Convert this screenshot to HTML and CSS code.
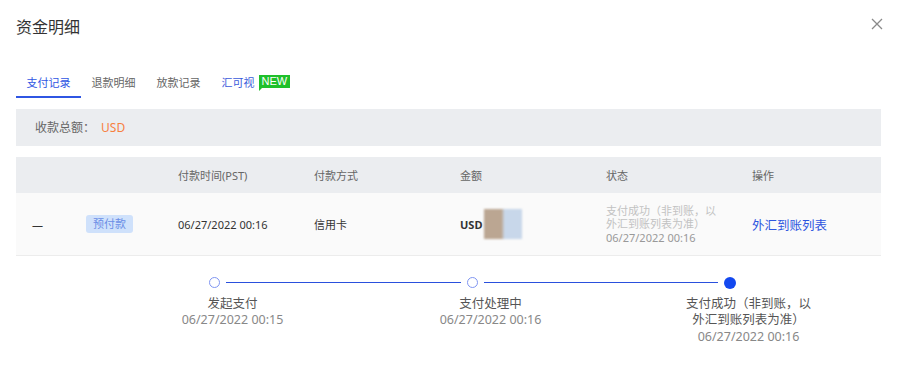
FILE: index.html
```html
<!DOCTYPE html>
<html lang="zh">
<head>
<meta charset="utf-8">
<title>资金明细</title>
<link rel="stylesheet" href="styles.css">
</head>
<body>
<div class="dialog">
  <div class="header">
    <div class="title">资金明细</div>
    <svg class="close" width="12" height="12" viewBox="0 0 12 12"><path d="M1 1L11 11M11 1L1 11" stroke="#8a8a8a" stroke-width="1.3" fill="none"/></svg>
  </div>
  <div class="tabs">
    <div class="tab active">支付记录</div>
    <div class="tab">退款明细</div>
    <div class="tab">放款记录</div>
    <div class="tab link">汇可视<span class="badge">NEW</span></div>
  </div>
  <div class="summary">收款总额：<span class="orange">USD</span></div>
  <div class="table">
    <div class="row head">
      <div class="cell"></div>
      <div class="cell"></div>
      <div class="cell">付款时间(PST)</div>
      <div class="cell">付款方式</div>
      <div class="cell">金额</div>
      <div class="cell">状态</div>
      <div class="cell">操作</div>
    </div>
    <div class="row body">
      <div class="cell">—</div>
      <div class="cell"><span class="tag">预付款</span></div>
      <div class="cell">06/27/2022 00:16</div>
      <div class="cell">信用卡</div>
      <div class="cell"><span class="bold">USD</span><span class="blur"></span></div>
      <div class="cell status"><span class="light">支付成功（非到账，以<br>外汇到账列表为准）</span><span class="date">06/27/2022 00:16</span></div>
      <div class="cell"><span class="action">外汇到账列表</span></div>
    </div>
  </div>
  <div class="timeline">
    <div class="step first">
      <div class="track"><span class="seg left"></span><span class="dot"></span><span class="seg right on"></span></div>
      <div class="name">发起支付</div>
      <div class="time">06/27/2022 00:15</div>
    </div>
    <div class="step">
      <div class="track"><span class="seg left on"></span><span class="dot"></span><span class="seg right on"></span></div>
      <div class="name">支付处理中</div>
      <div class="time">06/27/2022 00:16</div>
    </div>
    <div class="step last">
      <div class="track"><span class="seg left on"></span><span class="dot fill"></span><span class="seg right"></span></div>
      <div class="name">支付成功（非到账，以<br>外汇到账列表为准）</div>
      <div class="time">06/27/2022 00:16</div>
    </div>
  </div>
</div>
</body>
</html>
```
FILE: styles.css
```css
* { box-sizing: border-box; }
body {
  margin: 0;
  background: #fff;
  font-family: "Noto Sans", "Noto Sans CJK SC", sans-serif;
  color: #333;
}
.dialog {
  width: 898px;
  height: 365px;
  padding: 0 17px 0 16px;
}
.header {
  display: flex;
  justify-content: space-between;
  align-items: center;
  height: 54px;
}
.title {
  font-size: 16px;
  line-height: 22px;
  color: #333;
}
.close { margin-right: -2px; margin-top: -6px; }
.tabs {
  display: flex;
  margin-top: 16px;
  height: 28px;
}
.tab {
  padding: 0 10.5px;
  font-size: 11px;
  line-height: 26px;
  color: #666;
  border-bottom: 2px solid transparent;
  display: flex;
  align-items: flex-start;
}
.tab.active {
  color: #2f56e3;
  border-bottom-color: #2f56e3;
}
.tab.link { color: #3b5bdb; }
.badge {
  position: relative;
  top: 5px;
  margin-left: 4px;
  background: #1fc02b;
  color: #fff;
  font-size: 11px;
  line-height: 13px;
  height: 13px;
  padding: 0 3px;
  font-family: "Liberation Sans", sans-serif;
}
.badge::after {
  content: "";
  position: absolute;
  left: 0;
  bottom: -3px;
  border-left: 3px solid #1fc02b;
  border-bottom: 3px solid transparent;
}
.summary {
  margin-top: 11px;
  height: 37px;
  background: #ebedf0;
  padding-left: 19px;
  font-size: 12px;
  line-height: 37px;
  color: #666;
}
.orange { color: #f7803f; margin-left: 6px; }
.table { margin-top: 11px; }
.row {
  display: grid;
  grid-template-columns: 54px 92px 136px 146px 146px 146px 1fr;
  align-items: center;
}
.cell { padding-left: 16px; font-size: 11px; }
.row.head {
  height: 36px;
  background: #ebedf0;
  color: #666;
}
.row.body {
  height: 63px;
  background: #fafafa;
  border-bottom: 1px solid #ececec;
}
.tag {
  display: inline-block;
  background: #cfe1fb;
  color: #6b8ee6;
  border-radius: 3px;
  padding: 0 7px;
  line-height: 18px;
  font-size: 11px;
}
.bold { font-weight: bold; vertical-align: middle; }
.blur {
  display: inline-block;
  width: 38px;
  height: 30px;
  margin-left: 2px;
  vertical-align: middle;
  background: linear-gradient(90deg, #bba692 0%, #bba692 46%, #c8d7ea 54%, #c8d7ea 100%);
  filter: blur(1.2px);
}
.status { display: flex; flex-direction: column; line-height: 13.5px; }
.light { color: #c2c2c2; }
.date { color: #999; }
.action { color: #2d55e0; font-size: 12.5px; }
.timeline {
  display: grid;
  grid-template-columns: repeat(3, 258px);
  margin-left: 69px;
  margin-top: 20px;
}
.track {
  display: flex;
  align-items: center;
  height: 13px;
}
.seg {
  flex: 1;
  height: 1.5px;
}
.seg.left { margin-right: 6px; }
.seg.right { margin-left: 6px; }
.seg.on { background: #2a50dd; }
.dot {
  width: 11px;
  height: 11px;
  border-radius: 50%;
  border: 1.5px solid #7f95f2;
}
.dot.fill {
  width: 12px;
  height: 12px;
  background: #1348ef;
  border: none;
}
.name, .time {
  text-align: center;
  font-size: 12.5px;
  line-height: 16.5px;
  padding-left: 37px;
}
.name { color: #555; margin-top: 6.5px; }
.time { color: #888; }
```
